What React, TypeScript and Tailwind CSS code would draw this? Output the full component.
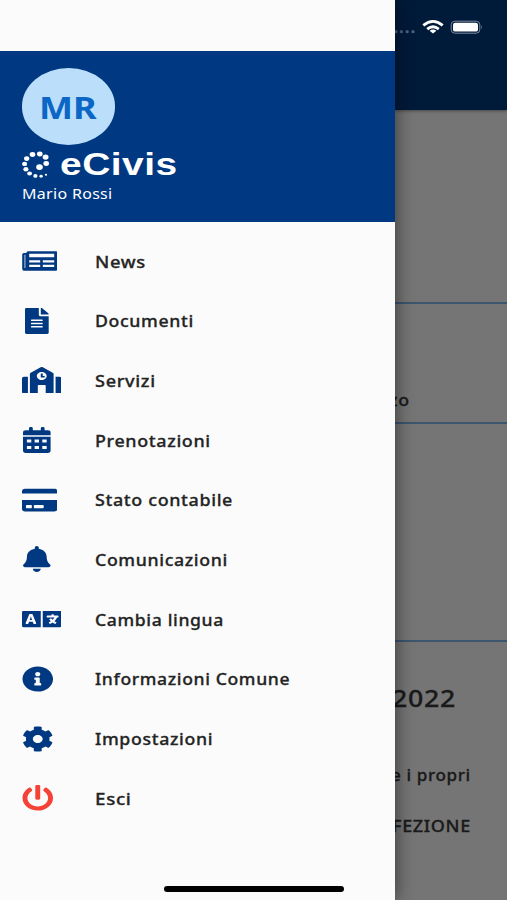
import React, { useLayoutEffect, useRef, useState } from 'react';
import {
  FaBell,
  FaCog,
  FaCreditCard,
  FaFileAlt,
  FaInfoCircle,
  FaLanguage,
  FaPowerOff,
  FaSchool,
} from 'react-icons/fa';

type IconProps = { className?: string; preserveAspectRatio?: string };

type MenuItem = {
  label: string;
  width: number;
  icon: React.ComponentType<IconProps>;
  iconClass: string;
};

const NewspaperIcon: React.FC<IconProps> = (props) => (
  <svg viewBox="0 0 35.5 26" fill="currentColor" {...props}>
    <path
      fillRule="evenodd"
      d="M6 3.2H34Q35.5 3.2 35.5 4.8V20.6Q35.5 22.8 33 22.8H2.8Q.2 22.8 .2 20.4V6.6Q.2 5 1.8 5H4.4V4.8Q4.4 3.2 6 3.2ZM7.2 5.8V9.3H32.2V5.8ZM7.2 12.3V14.4H18.2V12.3ZM20.8 12.3V14.4H32.2V12.3ZM7.2 16.8V18.9H18.2V16.8ZM20.8 16.8V18.9H32.2V16.8Z"
    />
    <path d="M2.9 6.8V20" stroke="#8fa8cd" strokeWidth="1.3" />
  </svg>
);

const CalendarIcon: React.FC<IconProps> = (props) => (
  <svg viewBox="0 0 27.6 26" fill="currentColor" {...props}>
    <rect x="6" y="0" width="3.8" height="6" rx="1.4" />
    <rect x="17.8" y="0" width="3.8" height="6" rx="1.4" />
    <path d="M2.8 3.3H24.8Q27.6 3.3 27.6 5.7V8.2H0V5.7Q0 3.3 2.8 3.3Z" />
    <path
      fillRule="evenodd"
      d="M0 9.7H27.6V23.6Q27.6 26 24.8 26H2.8Q0 26 0 23.6ZM3.9 12.5V15.6H8.3V12.5ZM11.6 12.5V15.6H16V12.5ZM19.3 12.5V15.6H23.7V12.5ZM3.9 19V22.1H8.3V19ZM11.6 19V22.1H16V19ZM19.3 19V22.1H23.7V19Z"
    />
  </svg>
);

const menu: MenuItem[] = [
  { label: 'News', width: 51, icon: NewspaperIcon, iconClass: 'w-[35.5px] text-[#003882]' },
  { label: 'Documenti', width: 99, icon: FaFileAlt, iconClass: 'w-[23.7px] text-[#003882]' },
  { label: 'Servizi', width: 61, icon: FaSchool, iconClass: 'w-[39.5px] text-[#003882]' },
  { label: 'Prenotazioni', width: 116, icon: CalendarIcon, iconClass: 'w-[27.6px] text-[#003882]' },
  { label: 'Stato contabile', width: 138, icon: FaCreditCard, iconClass: 'w-[35.5px] text-[#003882]' },
  { label: 'Comunicazioni', width: 132.5, icon: FaBell, iconClass: 'w-[27.6px] text-[#003882]' },
  { label: 'Cambia lingua', width: 128.5, icon: FaLanguage, iconClass: 'w-[39.5px] text-[#003882]' },
  { label: 'Informazioni Comune', width: 195.5, icon: FaInfoCircle, iconClass: 'w-[31.5px] text-[#003882]' },
  { label: 'Impostazioni', width: 118, icon: FaCog, iconClass: 'w-[31.5px] text-[#003882]' },
  { label: 'Esci', width: 36.5, icon: FaPowerOff, iconClass: 'w-[31.5px] text-[#f44336]' },
];

const logoDots = [
  [32, 154, 2.7],
  [39.3, 153.4, 2.7],
  [45.1, 156.6, 2.8],
  [45.7, 163, 2.7],
  [39, 166.6, 3.2],
  [26.2, 158.1, 2.5],
  [24.1, 163.4, 2.4],
  [25.4, 168.8, 2.4],
  [29.1, 173, 2.3],
  [34.9, 175.4, 2],
  [40.6, 175.7, 1.6],
  [45.5, 174.2, 1.1],
];

// Text stretched horizontally so that it fills exactly the given width
const WideText: React.FC<{ width: number; className?: string; children: string }> = ({ width, className = '', children }) => {
  const ref = useRef<HTMLSpanElement>(null);
  const [scale, setScale] = useState(1);

  useLayoutEffect(() => {
    if (ref.current) setScale(width / ref.current.offsetWidth);
  }, [width, children]);

  return (
    <span className="block" style={{ width }}>
      <span
        ref={ref}
        className={`inline-block origin-left whitespace-nowrap ${className}`}
        style={{ transform: `scaleX(${scale})` }}
      >
        {children}
      </span>
    </span>
  );
};

const StatusIcons: React.FC = () => (
  <svg className="block h-[50px] w-[112px]" viewBox="395 0 112 50" fill="none">
    <g fill="#4d627f">
      <circle cx="396" cy="31.7" r="1.6" />
      <circle cx="401.4" cy="31.7" r="1.6" />
      <circle cx="407.2" cy="31.7" r="1.6" />
      <circle cx="413" cy="31.7" r="1.6" />
    </g>
    <g stroke="#fff" strokeWidth="2.8">
      <path d="M423.3 25.4Q433 17.4 442.7 25.4" />
      <path d="M427.2 29.2Q433 24.4 438.8 29.2" />
    </g>
    <path d="M433 33.4L429.6 30.8Q433 28.2 436.4 30.8Z" fill="#fff" />
    <rect x="451.2" y="21.2" width="28.6" height="12" rx="3.6" stroke="#7d8a9e" strokeWidth="1" />
    <rect x="453" y="22.8" width="25" height="8.8" rx="2.2" fill="#fff" />
    <path d="M481.4 25.2Q483.2 27.2 481.4 29.2Z" fill="#7d8a9e" />
  </svg>
);

const Drawer: React.FC = () => (
  <aside className="flex h-full w-[395px] shrink-0 flex-col bg-[#fbfbfb] shadow-[2px_0_16px_rgba(0,0,0,0.45)]">
    <header className="mt-[51px] h-[171px] shrink-0 bg-[#003882] pl-[21.5px] pt-[17px]">
      <div className="flex h-[76.5px] w-[93.5px] items-center justify-center rounded-[50%] bg-[#bbdefb] pt-[1px]">
        <WideText width={58} className="text-[30.5px] font-bold leading-[40px] text-[#0b66c6]">MR</WideText>
      </div>
      <div className="flex h-[38px] items-center">
        <svg className="h-[38px] w-[38.5px] shrink-0" viewBox="21.5 144.5 38.5 38" fill="#fff">
          {logoDots.map(([cx, cy, r]) => (
            <ellipse key={`${cx}-${cy}`} cx={cx} cy={cy} rx={r * 1.05} ry={r * 0.92} />
          ))}
        </svg>
        <WideText
          width={118}
          className="font-['Liberation_Sans',Arial,sans-serif] text-[32px] font-bold leading-[38px] tracking-[0.4px] text-white"
        >
          eCivis
        </WideText>
      </div>
      <div className="-mt-[2px]">
        <WideText width={90.5} className="text-[15px] leading-[22px] tracking-[0.3px] text-white">Mario Rossi</WideText>
      </div>
    </header>

    <nav className="pt-[9.3px]">
      {menu.map((item) => (
        <a key={item.label} className="flex h-[59.68px] items-center pl-[21.5px]">
          <span className="flex w-[73px] shrink-0">
            <span className="flex w-fit min-w-[31.5px] justify-center">
              <item.icon className={`h-[26px] shrink-0 ${item.iconClass}`} preserveAspectRatio="none" />
            </span>
          </span>
          <span className="pt-[1px]">
            <WideText
              width={item.width}
              className="text-[17px] font-medium leading-6 tracking-[0.6px] text-[#242424] [-webkit-text-stroke:0.3px_#242424]"
            >
              {item.label}
            </WideText>
          </span>
        </a>
      ))}
    </nav>
  </aside>
);

const Backdrop: React.FC = () => (
  <div className="flex h-full min-w-0 flex-1 flex-col bg-[#757575] text-[#1a1a1a] [-webkit-text-stroke:0.3px_#1a1a1a]">
    <div className="h-[110px] shrink-0 bg-[#001a3a] shadow-[0_1px_3px_rgba(0,0,0,0.4)]">
      <StatusIcons />
    </div>
    <div className="h-[193.5px] shrink-0 border-b-2 border-[#3d566e]" />
    <div className="flex h-[120.5px] shrink-0 flex-col items-start justify-end border-b-2 border-[#3d566e] pb-[10px]">
      <div className="-ml-[6px]">
        <WideText width={21} className="text-[17px] font-medium leading-6 tracking-[0.6px]">zo</WideText>
      </div>
    </div>
    <div className="h-[218px] shrink-0 border-b-2 border-[#3d566e]" />
    <div className="-ml-[3px] pt-[38px]">
      <WideText width={63.5} className="text-[24px] font-medium leading-9 tracking-[0.6px]">2022</WideText>
    </div>
    <div className="-ml-[4px] pt-[47px]">
      <WideText width={79.5} className="text-[17px] font-medium leading-6 tracking-[0.6px]">e i propri</WideText>
    </div>
    <div className="-ml-[3px] pt-[27px]">
      <WideText width={78.5} className="text-[17px] font-medium leading-6 tracking-[0.6px]">FEZIONE</WideText>
    </div>
  </div>
);

export default function App() {
  return (
    <div className="relative flex h-[900px] w-[507px] overflow-hidden bg-[#757575] font-['Noto_Sans','Open_Sans',sans-serif]">
      <div className="relative z-10 flex">
        <Drawer />
      </div>
      <Backdrop />
      <div className="absolute bottom-[8.5px] left-[164px] z-20 h-[5.5px] w-[180px] rounded-full bg-black" />
    </div>
  );
}
